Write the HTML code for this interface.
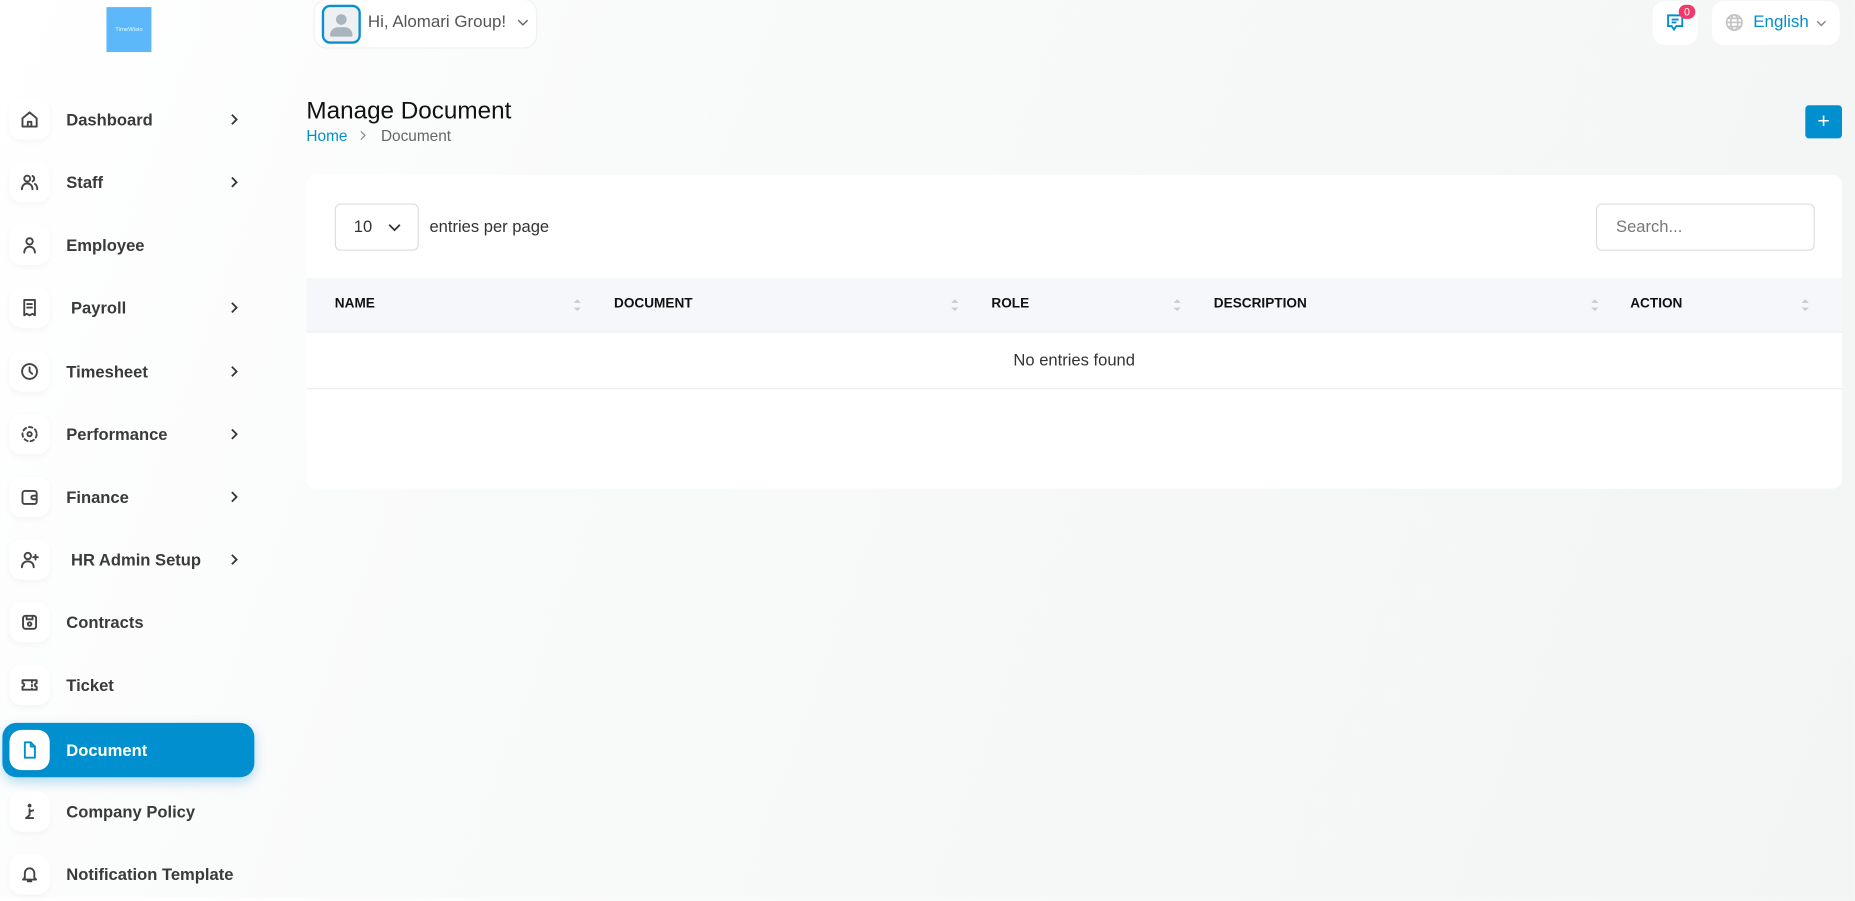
<!DOCTYPE html>
<html><head><meta charset="utf-8"><style>
html,body{margin:0;padding:0;width:1855px;height:897px;overflow:hidden}
body{background:linear-gradient(110deg,#ffffff 0%,#f9fafa 30%,#f3f5f5 100%);font-family:"Liberation Sans",sans-serif;color:#333}
#w{position:absolute;left:0;top:0;width:1568px;height:758px;transform:scale(1.18304);transform-origin:0 0}
.a{position:absolute}
.nav{position:absolute;left:0;width:220px;height:46px}
.ib{position:absolute;left:8px;top:6px;width:34px;height:34px;border-radius:10px;background:#fff;box-shadow:0 2px 6px rgba(0,0,0,.04);display:flex;align-items:center;justify-content:center}
.ib svg{width:16px;height:16px;fill:none;stroke:#444;stroke-width:1.6;stroke-linecap:round;stroke-linejoin:round}
.lb{position:absolute;left:56px;top:15px;font-size:14px;font-weight:bold;color:#3a3a3a}
.ch{position:absolute;left:193px;top:16px;width:10px;height:14px}
.act{background:#0090cf;border-radius:12px;left:2px;width:213px;box-shadow:0 4px 10px rgba(0,144,207,.3)}
.act .lb{color:#fff}
.th{position:absolute;top:0;height:45px;line-height:45px;font-size:11.5px;font-weight:bold;color:#111}
.so{position:absolute;top:16px;width:8px;height:14px}
</style></head><body><div id="w">
<div class="a" style="left:90px;top:6px;width:38px;height:38px;background:#5cb8fa;color:#dff;font-size:5px;text-align:center;line-height:38px">TimeWisio</div>
<div class="a" style="left:266px;top:0;width:187px;height:40px;background:#fff;border-radius:10px;box-shadow:0 0 0 1px #f0f0f0"></div>
<div class="a" style="left:272px;top:4px;width:29px;height:29px;border:2px solid #0d8ecf;border-radius:7px;background:#eef1f3;overflow:hidden"><div class="a" style="left:10px;top:6px;width:9px;height:9px;border-radius:50%;background:#a9b4bc"></div><div class="a" style="left:5px;top:17px;width:19px;height:8px;border-radius:9px 9px 2px 2px;background:#a9b4bc"></div></div>
<div class="a" style="left:311px;top:11px;font-size:14.3px;color:#555">Hi, Alomari Group!</div>
<svg class="a" style="left:437px;top:16px" width="10" height="7" viewBox="0 0 10 7"><path d="M1 1l4 4 4-4" fill="none" stroke="#666" stroke-width="1.2"/></svg>
<div class="a" style="left:1397px;top:1px;width:38px;height:37px;background:#fff;border-radius:10px"></div>
<svg class="a" style="left:1408px;top:11px" width="16" height="16" viewBox="0 0 16 16" fill="none" stroke="#0090cf" stroke-width="1.6"><path d="M2 2h12v9H9l-2 3-2-3H2z"/><path d="M5 5.5h6M5 8h4"/></svg>
<div class="a" style="left:1419px;top:4px;width:14px;height:12px;border-radius:6px;background:#f5386b;color:#fff;font-size:9px;text-align:center;line-height:12px">0</div>
<div class="a" style="left:1447px;top:1px;width:108px;height:37px;background:#fff;border-radius:10px"></div>
<svg class="a" style="left:1458px;top:11px" width="16" height="16" viewBox="0 0 16 16" fill="none" stroke="#c4c4c4" stroke-width="1.4"><circle cx="8" cy="8" r="6.5"/><ellipse cx="8" cy="8" rx="3" ry="6.5"/><path d="M1.5 8h13M2.5 4.5h11M2.5 11.5h11"/></svg>
<div class="a" style="left:1482px;top:11px;font-size:14.3px;color:#0090cf">English</div>
<svg class="a" style="left:1535px;top:17px" width="9" height="6" viewBox="0 0 9 6"><path d="M1 1l3.5 3.5L8 1" fill="none" stroke="#888" stroke-width="1.2"/></svg>

<div class="a" style="left:259px;top:82px;font-size:20.5px;color:#111">Manage Document</div>
<div class="a" style="left:259px;top:107px;font-size:13px;color:#0090cf">Home</div>
<svg class="a" style="left:304px;top:110px" width="6" height="9" viewBox="0 0 6 9"><path d="M1 1l3.5 3.5L1 8" fill="none" stroke="#888" stroke-width="1"/></svg>
<div class="a" style="left:322px;top:107px;font-size:13px;color:#666">Document</div>
<div class="a" style="left:1526px;top:89px;width:31px;height:28px;background:#0090cf;border-radius:3px;color:#fff;font-size:18px;text-align:center;line-height:27px">+</div>

<div class="a" style="left:259px;top:148px;width:1298px;height:265px;background:#fff;border-radius:8px">
<div class="a" style="left:24px;top:24px;width:69px;height:38px;border:1px solid #ddd;border-radius:5px"><span class="a" style="left:15px;top:10px;font-size:14px;color:#333">10</span><svg class="a" style="left:44px;top:16px" width="11" height="7" viewBox="0 0 11 7"><path d="M1 1l4.5 4.5L10 1" fill="none" stroke="#333" stroke-width="1.5"/></svg></div>
<div class="a" style="left:104px;top:35px;font-size:14px;color:#333">entries per page</div>
<div class="a" style="left:1090px;top:24px;width:183px;height:38px;border:1px solid #ddd;border-radius:5px"><span class="a" style="left:16px;top:10px;font-size:14px;color:#777">Search...</span></div>
<div class="a" style="left:0;top:87px;width:1298px;height:45px;background:#f6f7fa;border-bottom:1px solid #ebedf0">
<div class="th" style="left:24px">NAME</div><svg class="so" style="left:225px" viewBox="0 0 8 14"><path d="M1 5l3-3 3 3zM1 9l3 3 3-3z" fill="#ccc"/></svg>
<div class="th" style="left:260px">DOCUMENT</div><svg class="so" style="left:544px" viewBox="0 0 8 14"><path d="M1 5l3-3 3 3zM1 9l3 3 3-3z" fill="#ccc"/></svg>
<div class="th" style="left:579px">ROLE</div><svg class="so" style="left:732px" viewBox="0 0 8 14"><path d="M1 5l3-3 3 3zM1 9l3 3 3-3z" fill="#ccc"/></svg>
<div class="th" style="left:767px">DESCRIPTION</div><svg class="so" style="left:1085px" viewBox="0 0 8 14"><path d="M1 5l3-3 3 3zM1 9l3 3 3-3z" fill="#ccc"/></svg>
<div class="th" style="left:1119px">ACTION</div><svg class="so" style="left:1263px" viewBox="0 0 8 14"><path d="M1 5l3-3 3 3zM1 9l3 3 3-3z" fill="#ccc"/></svg>
</div>
<div class="a" style="left:0;top:133px;width:1298px;height:47px;border-bottom:1px solid #ebedf0;text-align:center;line-height:47px;font-size:14px;color:#333">No entries found</div>
</div>

<div class="nav" style="top:78px"><div class="ib"><svg viewBox="0 0 16 16"><path d="M2 7l6-5 6 5v7H2z"/><path d="M6.5 14v-4h3v4"/></svg></div><div class="lb">Dashboard</div><svg class="ch" viewBox="0 0 10 14"><path d="M3 3l4 4-4 4" fill="none" stroke="#333" stroke-width="1.5"/></svg></div>
<div class="nav" style="top:131px"><div class="ib"><svg viewBox="0 0 16 16"><circle cx="6" cy="5" r="2.5"/><path d="M1.5 14c0-3 2-5 4.5-5s4.5 2 4.5 5"/><path d="M10.5 2.8a2.5 2.5 0 010 4.5M12.5 9.5c1.3.8 2 2.5 2 4.5"/></svg></div><div class="lb">Staff</div><svg class="ch" viewBox="0 0 10 14"><path d="M3 3l4 4-4 4" fill="none" stroke="#333" stroke-width="1.5"/></svg></div>
<div class="nav" style="top:184px"><div class="ib"><svg viewBox="0 0 16 16"><circle cx="8" cy="5" r="2.7"/><path d="M3.5 14.5c0-3 2-5 4.5-5s4.5 2 4.5 5"/></svg></div><div class="lb">Employee</div></div>
<div class="nav" style="top:237px"><div class="ib"><svg viewBox="0 0 16 16"><path d="M3.5 1.5h9v13l-2-1.2-2.5 1.2-2.5-1.2-2 1.2z"/><path d="M6 5h4M6 8h4"/></svg></div><div class="lb" style="left:60px">Payroll</div><svg class="ch" viewBox="0 0 10 14"><path d="M3 3l4 4-4 4" fill="none" stroke="#333" stroke-width="1.5"/></svg></div>
<div class="nav" style="top:291px"><div class="ib"><svg viewBox="0 0 16 16"><circle cx="8" cy="8" r="6.3"/><path d="M8 4.5V8l2.2 2"/></svg></div><div class="lb">Timesheet</div><svg class="ch" viewBox="0 0 10 14"><path d="M3 3l4 4-4 4" fill="none" stroke="#333" stroke-width="1.5"/></svg></div>
<div class="nav" style="top:344px"><div class="ib"><svg viewBox="0 0 16 16"><circle cx="8" cy="8" r="6" stroke-dasharray="3 2.5"/><circle cx="8" cy="8" r="1.8"/></svg></div><div class="lb">Performance</div><svg class="ch" viewBox="0 0 10 14"><path d="M3 3l4 4-4 4" fill="none" stroke="#333" stroke-width="1.5"/></svg></div>
<div class="nav" style="top:397px"><div class="ib"><svg viewBox="0 0 16 16"><rect x="2" y="3" width="12" height="11" rx="2"/><path d="M14 7h-3a1.5 1.5 0 000 3h3"/></svg></div><div class="lb">Finance</div><svg class="ch" viewBox="0 0 10 14"><path d="M3 3l4 4-4 4" fill="none" stroke="#333" stroke-width="1.5"/></svg></div>
<div class="nav" style="top:450px"><div class="ib"><svg viewBox="0 0 16 16"><circle cx="6.5" cy="5" r="2.7"/><path d="M1.5 14.5c0-3 2-5 5-5s5 2 5 5M13 4v4M11 6h4"/></svg></div><div class="lb" style="left:60px">HR Admin Setup</div><svg class="ch" viewBox="0 0 10 14"><path d="M3 3l4 4-4 4" fill="none" stroke="#333" stroke-width="1.5"/></svg></div>
<div class="nav" style="top:503px"><div class="ib"><svg viewBox="0 0 16 16"><rect x="2.5" y="2.5" width="11" height="11" rx="2"/><path d="M5.5 2.5v3h5v-3"/><circle cx="8" cy="9.5" r="1.5"/></svg></div><div class="lb">Contracts</div></div>
<div class="nav" style="top:556px"><div class="ib"><svg viewBox="0 0 16 16"><path d="M2 4h12v2.5a1.5 1.5 0 000 3V12H2V9.5a1.5 1.5 0 000-3z"/><path d="M10 5v1M10 8v1M10 11v0"/></svg></div><div class="lb">Ticket</div></div>
<div class="nav act" style="top:611px"><div class="ib" style="top:6px;left:6px"><svg viewBox="0 0 16 16" style="stroke:#0090cf"><path d="M4 1.5h5l3.5 3.5v9.5H4z"/><path d="M9 1.5V5h3.5"/></svg></div><div class="lb" style="left:54px">Document</div></div>
<div class="nav" style="top:663px"><div class="ib"><svg viewBox="0 0 16 16"><circle cx="8" cy="3" r="0.8" fill="#444"/><path d="M8 6v5M8 8l3-1M5 13.5h6M8 11l-3 2.5"/></svg></div><div class="lb">Company Policy</div></div>
<div class="nav" style="top:716px"><div class="ib"><svg viewBox="0 0 16 16"><path d="M4 11V7a4 4 0 018 0v4l1.5 1.5h-11zM6.5 14h3"/></svg></div><div class="lb">Notification Template</div></div>
</div></body></html>
